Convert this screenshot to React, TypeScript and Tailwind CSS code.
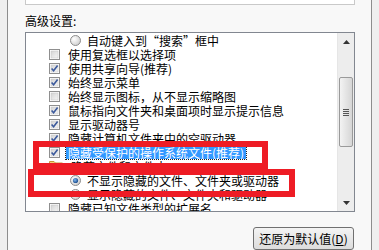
import React from 'react';

type Row = {
  kind: 'check' | 'radio' | 'folder';
  label: string;
  on?: boolean;
  sub?: boolean;
  selected?: boolean;
};

const rows: Row[] = [
  { kind: 'radio', sub: true, label: '自动键入到“搜索”框中' },
  { kind: 'check', label: '使用复选框以选择项' },
  { kind: 'check', on: true, label: '使用共享向导(推荐)' },
  { kind: 'check', on: true, label: '始终显示菜单' },
  { kind: 'check', label: '始终显示图标，从不显示缩略图' },
  { kind: 'check', on: true, label: '鼠标指向文件夹和桌面项时显示提示信息' },
  { kind: 'check', on: true, label: '显示驱动器号' },
  { kind: 'check', on: true, label: '隐藏计算机文件夹中的空驱动器' },
  { kind: 'check', on: true, selected: true, label: '隐藏受保护的操作系统文件(推荐)' },
  { kind: 'folder', label: '隐藏文件和文件夹' },
  { kind: 'radio', sub: true, on: true, label: '不显示隐藏的文件、文件夹或驱动器' },
  { kind: 'radio', sub: true, label: '显示隐藏的文件、文件夹和驱动器' },
  { kind: 'check', label: '隐藏已知文件类型的扩展名' },
];

const CheckBox = ({ on }: { on?: boolean }) => (
  <svg width="11" height="11" viewBox="0 0 11 11" className="shrink-0">
    <defs>
      <linearGradient id="cbg" x1="0" y1="0" x2="1" y2="1">
        <stop offset="0" stopColor="#d4d4d4" />
        <stop offset="1" stopColor="#f6f6f6" />
      </linearGradient>
    </defs>
    <rect x="0.5" y="0.5" width="10" height="10" fill="#fff" stroke="#8f8f8f" />
    <rect x="2" y="2" width="7" height="7" fill="url(#cbg)" stroke="#c4c4c4" strokeWidth="0.5" />
    {on && <path d="M2.6 5.4 L4.6 7.8 L8.6 2.4" fill="none" stroke="#3c5a9c" strokeWidth="1.6" />}
  </svg>
);

const Radio = ({ on }: { on?: boolean }) => (
  <svg width="11" height="11" viewBox="0 0 11 11" className="shrink-0">
    <defs>
      <radialGradient id="rbg" cx="0.35" cy="0.35" r="0.7">
        <stop offset="0" stopColor="#ffffff" />
        <stop offset="1" stopColor="#cfcfcf" />
      </radialGradient>
      <radialGradient id="rdot" cx="0.4" cy="0.4" r="0.6">
        <stop offset="0" stopColor="#7fb6ee" />
        <stop offset="1" stopColor="#1d4f8f" />
      </radialGradient>
    </defs>
    <circle cx="5.5" cy="5.5" r="5" fill="url(#rbg)" stroke="#8c8c8c" />
    {on && <circle cx="5.5" cy="5.5" r="2.6" fill="url(#rdot)" />}
  </svg>
);

const Folder = () => (
  <svg width="14" height="12" viewBox="0 0 14 12" className="shrink-0">
    <path d="M0.5 1.5 H5 L6.5 3 H13.5 V11.5 H0.5 Z" fill="#f2d27a" stroke="#c09a3a" />
  </svg>
);

const ListRow = ({ row }: { row: Row }) => (
  <div className={`flex h-[14px] items-center ${row.sub ? 'pl-[44px]' : 'pl-[23px]'}`}>
    {row.kind === 'check' && <CheckBox on={row.on} />}
    {row.kind === 'radio' && <Radio on={row.on} />}
    {row.kind === 'folder' && <Folder />}
    <span
      className={`whitespace-nowrap px-[2px] leading-[13px] ${row.sub ? 'ml-[4px]' : 'ml-[6px]'} ${
        row.selected ? 'bg-[#3399ff] text-white outline-1 outline-dotted outline-[#222]' : 'text-black'
      }`}
    >
      {row.label}
    </span>
  </div>
);

const ScrollBar = () => (
  <div className="flex w-[17px] shrink-0 flex-col border-l border-[#e6e6e6] bg-[#ededed]">
    <div className="flex h-[17px] items-center justify-center">
      <svg width="7" height="4" viewBox="0 0 7 4">
        <path d="M0 4 L3.5 0 L7 4 Z" fill="#333" />
      </svg>
    </div>
    <div className="h-[27px]" />
    <div className="mx-[1px] flex h-[70px] flex-col items-center justify-center gap-[1px] rounded-[2px] border border-[#9a9a9a] bg-gradient-to-r from-[#f3f3f3] to-[#d6d6d6]">
      <div className="h-px w-[6px] bg-[#555]" />
      <div className="h-px w-[6px] bg-[#555]" />
      <div className="h-px w-[6px] bg-[#555]" />
      <div className="h-px w-[6px] bg-[#555]" />
    </div>
    <div className="flex-1" />
    <div className="flex h-[17px] items-center justify-center">
      <svg width="7" height="4" viewBox="0 0 7 4">
        <path d="M0 0 L3.5 4 L7 0 Z" fill="#333" />
      </svg>
    </div>
  </div>
);

const App = () => {
  return (
    <div
      className="relative flex h-[250px] w-[379px] overflow-hidden bg-[#efefef] text-[12px]"
      style={{ fontFamily: '"Noto Sans CJK SC", "Noto Sans", sans-serif' }}
    >
      <div className="w-[7px] shrink-0" />
      <div className="flex w-[365px] shrink-0 flex-col border-x border-[#8d8d8d] bg-[#f8f8f8] pl-[17px]">
        <div className="h-[8px] w-[330px] border-x border-b border-[#c9c9c9] bg-white" />
        <div className="mt-[8px] h-[16px] leading-[16px] text-black">高级设置:</div>
        <div className="mt-[3px] flex h-[180px] w-[330px] border border-[#828790] bg-white">
          <div className="flex-1 overflow-hidden">
            {rows.map((r, i) => (
              <ListRow key={i} row={r} />
            ))}
          </div>
          <ScrollBar />
        </div>
        <div className="mt-[15px] flex w-[329px] justify-end">
          <button className="h-[23px] w-[101px] rounded-[3px] border border-[#707070] bg-gradient-to-b from-[#f4f4f4] to-[#dcdcdc] leading-[20px] text-black">
            还原为默认值(<span className="underline">D</span>)
          </button>
        </div>
      </div>
      <div className="flex-1" />

      <div className="absolute left-[33px] top-[141px] h-[28px] w-[235px] border-[6px] border-[#ee1c25]" />
      <div className="absolute left-[28px] top-[169px] h-[28px] w-[267px] border-[6px] border-[#ee1c25]" />
    </div>
  );
};

export default App;
